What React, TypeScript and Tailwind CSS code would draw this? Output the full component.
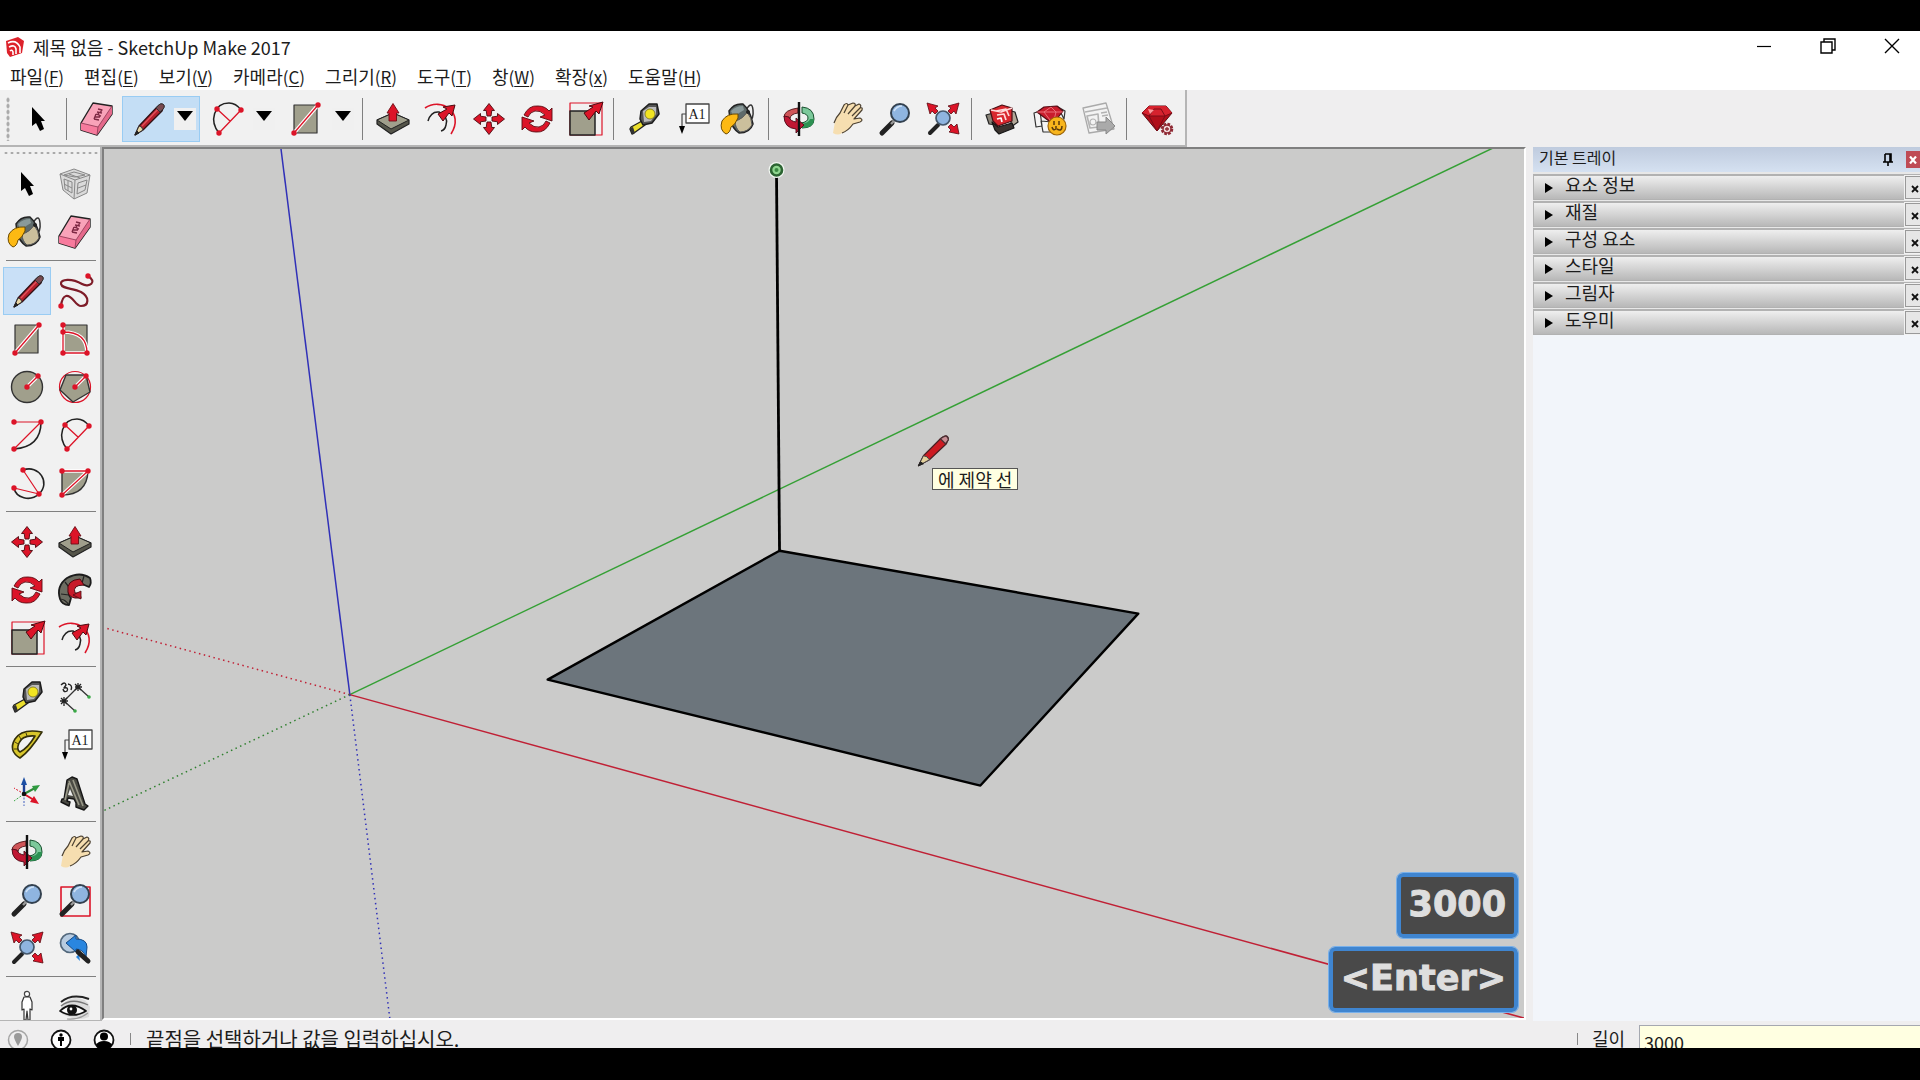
import React from 'react';

const RED = '#dc1428';
const KHAKI = '#a09f8c';

function Icon({ children }: { children: React.ReactNode }) {
  return (
    <svg viewBox="-18 -18 36 36" className="h-9 w-9 overflow-visible" fill="none" aria-hidden="true" strokeLinejoin="round">
      {children}
    </svg>
  );
}

function Dots({ at }: { at: [number, number][] }) {
  return (
    <>
      {at.map(([x, y]) => (
        <circle key={`${x},${y}`} cx={x} cy={y} r="2.7" fill={RED} />
      ))}
    </>
  );
}

const Pointer = () => (
  <Icon>
    <path d="M-6-12V7L-2 4L2 12L6 10L3 2H7Z" fill="#000" />
  </Icon>
);

const Component = () => (
  <Icon>
    <g stroke="#888" strokeWidth="1">
      <path d="M-15-10L-1-15L15-9L12 9L-1 15L-12 6Z" fill="#dadada" />
      <path d="M-15-10L0-4L15-9M0-4L-1 15M-11-9L-1-12L10-9L0-7ZM-11-5L-3-2L-3 9L-10 5ZM3-1L12-4L10 6L2 10ZM-11 0L-3 4M3 4L11 1M-6-10L5-6M-7-3L-7 7" />
    </g>
  </Icon>
);

const Bucket = () => (
  <Icon>
    <path d="M6-9Q12-19 13-9Q14 0 9 2" stroke="#333" strokeWidth="1.5" />
    <path d="M-11-8Q-6-16 3-15Q10-9 13 5Q10 14-1 14Q-8 9-10 0Z" fill="#5e6a6a" stroke="#222" strokeWidth="1.5" />
    <path d="M-5 2Q3 0 7-7Q12-1 12 6Q8 13 0 13Q-5 9-5 2Z" fill="#cbbf9c" stroke="#555" strokeWidth="1" />
    <path d="M-9-8Q-4-13 3-13L4-9Q-2-5-7-3Z" fill="#8a9a9a" />
    <path d="M-2-5Q-13-6-18 2Q-21 11-14 15Q-10 14-9 8Q-5 6-2-1Z" fill="#fdb913" stroke="#6b4a00" strokeWidth="1" />
    <circle cx="8" cy="-7" r="2" fill="#222" />
  </Icon>
);

const Eraser = () => (
  <Icon>
    <path d="M-4-16L15-13V-5L0 16L-16 11V4Z" fill="#f9a3b9" stroke="#222" strokeWidth="1.4" />
    <path d="M-16 4L1 8L0 16L-16 11Z" fill="#f77b9d" />
    <path d="M1 8L15-13V-5L0 16Z" fill="#e5698b" />
    <path d="M-16 4L1 8L15-13M1 8L0 16" stroke="#8a3550" strokeWidth="0.8" />
    <path d="M-3 0L2 1M-2-2L3-2M-1-5L4-3M0-7L5-6M1-10L5-9L3-6M-3 0L-1-5M3-2L1-6" stroke="#7d2843" strokeWidth="1.3" />
  </Icon>
);

const Pencil = () => (
  <Icon>
    <path d="M-13 16L-9 7L9-12Q14-17 16-13L14-8L-5 11Z" fill="#b5202c" stroke="#301014" strokeWidth="1.3" />
    <path d="M-13 16L-9 7Q-6 7-5 11Z" fill="#ead7a4" stroke="#333" strokeWidth="1" />
    <path d="M-13 16L-11 12L-9 14Z" fill="#222" stroke="#222" />
    <path d="M-6 7L11-11" stroke="#e0525b" strokeWidth="1.3" />
    <path d="M8-11L12-7L16-11Q17-16 12-15Z" fill="#7a4a50" stroke="#333" strokeWidth="1" />
  </Icon>
);

const Arc2 = () => (
  <Icon>
    <path d="M-8 14C-18 2-13-16 2-16Q9-16 14-9" stroke="#222" strokeWidth="1.5" />
    <path d="M-8 14L14-9M-10-10L3 2" stroke={RED} strokeWidth="1.3" />
    <Dots at={[[-10, -10], [14, -9], [-8, 14]]} />
  </Icon>
);

const Rect = () => (
  <Icon>
    <path d="M-12-14H11V14H-12Z" fill={KHAKI} stroke="#333" strokeWidth="1.2" />
    <path d="M-12 14L12-14" stroke="#fff" strokeWidth="3.6" />
    <path d="M-12 14L12-14" stroke={RED} strokeWidth="1.3" />
    <Dots at={[[-12, 14], [12, -14]]} />
  </Icon>
);

const RotRect = () => (
  <Icon>
    <path d="M-12-14H12V14H-12Z" fill={KHAKI} stroke="#333" strokeWidth="1.2" />
    <path d="M-12-14V14H12Q12-7-12-7" stroke="#fff" strokeWidth="3.6" />
    <path d="M-12-14V14H12Q12-7-12-7" stroke={RED} strokeWidth="1.3" />
    <Dots at={[[-12, -14], [-12, -7], [-12, 14], [12, 14]]} />
  </Icon>
);

const Freehand = () => (
  <Icon>
    <path d="M13-15C23-9 14-3 7-7C-3-13-15-12-14-7C-13-2-2-3 6 1C15 6 14 15 6 15C0 15-2 4-9 5Q-13 6-14 15" stroke="#7e1c28" strokeWidth="2.2" />
    <Dots at={[[13, -15], [-14, 15]]} />
  </Icon>
);

const Circle = () => (
  <Icon>
    <circle r="15.5" fill={KHAKI} stroke="#333" strokeWidth="1.4" />
    <path d="M0 0L11-11" stroke="#fff" strokeWidth="3.6" />
    <path d="M0 0L11-11" stroke={RED} strokeWidth="1.3" />
    <Dots at={[[0, 0], [11, -11]]} />
  </Icon>
);

const Polygon = () => (
  <Icon>
    <circle r="15.5" stroke={RED} strokeWidth="1.2" />
    <path d="M-9-12L11-12L15 5L-2 15L-15 3Z" fill={KHAKI} stroke="#333" strokeWidth="1.4" />
    <path d="M0 0L11-11" stroke="#fff" strokeWidth="3.6" />
    <path d="M0 0L11-11" stroke={RED} strokeWidth="1.3" />
    <Dots at={[[0, 0], [11, -11]]} />
  </Icon>
);

const Arc = () => (
  <Icon>
    <path d="M14-13Q14 12-13 14" stroke="#222" strokeWidth="1.6" />
    <path d="M-13-13H14L-13 14" stroke={RED} strokeWidth="1.2" />
    <Dots at={[[-13, -13], [14, -13], [-13, 14]]} />
  </Icon>
);

const Arc3 = () => (
  <Icon>
    <path d="M-4-13C12-19 24 0 12 11C3 19-11 15-13 5" stroke="#222" strokeWidth="1.6" />
    <path d="M-4-13L12 11L-13 5" stroke={RED} strokeWidth="1.2" />
    <Dots at={[[-4, -13], [12, 11], [-13, 5]]} />
  </Icon>
);

const Pie = () => (
  <Icon>
    <path d="M-13-12H13Q12 12-13 12Z" fill={KHAKI} stroke="#333" strokeWidth="1.4" />
    <path d="M-13-12H13L-13 12" stroke="#fff" strokeWidth="3.6" />
    <path d="M-13-12H13L-13 12" stroke={RED} strokeWidth="1.3" />
    <Dots at={[[-13, -12], [13, -12], [-13, 12]]} />
  </Icon>
);

const Move = () => (
  <Icon>
    {[0, 90, 180, 270].map((a) => (
      <path key={a} transform={`rotate(${a})`} d="M0-15.5L5.5-8.5H2.8L2-3H-2L-2.8-8.5H-5.5Z" fill={RED} stroke="#4c0a10" strokeWidth="0.9" />
    ))}
    <circle r="1.5" fill="#fff" />
  </Icon>
);

const PushPull = () => (
  <Icon>
    <path d="M-16 1L0-6L16 1V5L-2 15L-16 5Z" fill="#55554a" stroke="#222" strokeWidth="1.2" />
    <path d="M-16 1L0-6L16 1L-2 10Z" fill={KHAKI} stroke="#222" strokeWidth="1" />
    <path d="M0-15.5L6-6H3.5V2H-4V-6H-6Z" fill={RED} stroke="#6b0c14" strokeWidth="0.9" />
  </Icon>
);

const Rotate = () => (
  <Icon>
    {[0, 180].map((a) => (
      <path key={a} transform={`rotate(${a})`} d="M-13-4Q-8-14 1-13Q8-13 12-8L15-11V2L3-2L8-4Q3-9-2-8Q-7-7-9-2Z" fill={RED} stroke="#5a0b12" strokeWidth="0.9" />
    ))}
  </Icon>
);

const FollowMe = () => (
  <Icon>
    <path d="M-15 9Q-19-4-8-12Q5-19 15-12Q17-7 14-3L7-6Q0-8-5-2Q-8 4-4 8L-6 15Q-13 15-15 9Z" fill="#6d6d62" stroke="#1c1c1c" strokeWidth="1.8" />
    <path d="M-10-8Q-4-1-5 3M-14 4L-6 5M9-14L7-7M-15 9Q-10 9-6 15" stroke="#222" strokeWidth="1.2" />
    <path d="M5-11Q-9-10-7 2Q-6 7 0 8H6L5 3L0 3Q-3-5 9-5Z" fill="#c71a2a" stroke="#4c0a10" strokeWidth="1" />
    <path d="M-2 5L6 1V9Z" fill="#c71a2a" stroke="#4c0a10" strokeWidth="0.8" />
  </Icon>
);

const Scale = () => (
  <Icon>
    <path d="M-15-16H17V16H-15Z" stroke={RED} strokeWidth="1.2" />
    <path d="M-15-8H10V16H-15Z" fill={KHAKI} stroke="#222" strokeWidth="1.5" />
    <path d="M18-17L14-5L11-8L4 1L-1-6L8-12L4-13Z" fill={RED} stroke="#4c0a10" strokeWidth="1" />
  </Icon>
);

const Offset = () => (
  <Icon>
    <path d="M-16-11C0-22 24-7 10 15" stroke={RED} strokeWidth="1.6" />
    <path d="M-13 2Q-10-8-2-7Q8-2 5 6Q4 11 0 12" stroke="#222" strokeWidth="1.5" />
    <path d="M14-14L11-3L8-6L2 2L-3-5L6-10L2-12Z" fill={RED} stroke="#4c0a10" strokeWidth="1" />
  </Icon>
);

const Tape = () => (
  <Icon>
    <path d="M-13 8L-2 2L1 6L-10 14L-12 15L-14 10Z" fill="#ebdf2d" stroke="#222" strokeWidth="1.4" />
    <path d="M-14 9L-11 8L-9 14L-12 15Z" fill="#333" />
    <path d="M-3-8L5-15L13-15L15-5L8 4L-1 6L-4 0Z" fill="#555" stroke="#1c1c1c" strokeWidth="1.5" />
    <path d="M-1-8L5-12L12-12L12-5L7 2L0 3Z" fill="#bbb" />
    <circle cx="6" cy="-5" r="5" fill="#f2e421" stroke="#77701a" strokeWidth="0.8" />
  </Icon>
);

const Dimension = () => (
  <Icon>
    <path d="M3-10L-11 4M3-10L14 0M-11 4L0 14" stroke="#333" strokeWidth="1.3" />
    <path d="M0-13L6-7M3-14V-6M0-10H7M6-13L0-7M-14 1L-8 7M-11 0V9M-15 4H-7M-8 1L-14 7" stroke="#222" strokeWidth="1.3" />
    <path d="M-14-12Q-10-16-9-12L-11-9Q-6-10-8-6Q-11-4-12-8M-7-13Q-2-12-4-7" stroke="#222" strokeWidth="1.4" />
    <circle cx="14" cy="0" r="1.8" fill="#39a845" />
    <circle cx="0" cy="14" r="1.8" fill="#39a845" />
  </Icon>
);

const Protractor = () => (
  <Icon>
    <path fillRule="evenodd" d="M15-13Q-5-17-12-6Q-19 6-7 13Q3 6 15-13ZM8-9Q-5-10-8-2Q-11 5-7 7Q1 3 8-9Z" fill="#d8c62b" stroke="#332f0a" strokeWidth="1.6" />
    <path d="M-12-3L-9-1M-8-9L-6-6M-1-12L0-9M-13 4L-10 4" stroke="#443d0c" />
  </Icon>
);

const TextTool = () => (
  <Icon>
    <path d="M-6-15H17V4H-6Z" fill="#fff" stroke="#444" strokeWidth="1.3" />
    <path d="M-6-5H-10V8" stroke="#444" strokeWidth="1.2" />
    <path d="M-13 7H-7L-10 15Z" fill="#000" />
    <text x="5" y="0" textAnchor="middle" fontSize="14" fill="#222" fontFamily="Liberation Serif, serif">A1</text>
  </Icon>
);

const Axes = () => (
  <Icon>
    <path d="M-3 1V-9" stroke="#1d3f94" strokeWidth="2.4" />
    <path d="M-6-8H0L-3-16Z" fill="#1d4fa4" />
    <path d="M-3 1L8-5" stroke="#2f8a38" strokeWidth="2" />
    <path d="M5-7L13-8L8-1Z" fill="#2f9a40" />
    <path d="M-3 1L7 7" stroke={RED} strokeWidth="2" />
    <path d="M7 3L12 11L3 9Z" fill={RED} />
    <path d="M-3 1V13" stroke="#7c90cf" strokeDasharray="2 1.5" strokeWidth="1.5" />
    <path d="M-3 1L-13-5" stroke={RED} strokeDasharray="2 1.5" />
    <path d="M-3 1L-13 8" stroke="#39a845" strokeDasharray="2 1.5" />
    <circle cx="-3" cy="1" r="2.3" fill="#111" />
  </Icon>
);

const Text3D = () => (
  <Icon>
    <path d="M-8-13L-3-16L2-14L10 11L13 13L9 17L1 14V10L-1 6L-7 5L-8 8L-5 9L-6 13L-14 9L-13 6L-11 6Z" fill="#4a4a43" stroke="#161616" strokeWidth="1.4" />
    <path d="M-6-12L4 12M-2-13L8 13M-6-10L-10 7" stroke="#9a9989" strokeWidth="1.6" />
    <path d="M-5-4L-2 3L-7 2Z" fill="#eee" />
  </Icon>
);

const Orbit = () => (
  <Icon>
    <path d="M-1-11Q-15-9-15-2L-9 0Q-9-5-1-6Z" fill="#cf5558" stroke="#4b1518" strokeWidth="0.9" />
    <path d="M3-6V-12Q15-11 15 0Q15 9 3 9L2 4Q9 3 9-1Q9-5 3-6Z" fill="#7cc99b" stroke="#174f2d" strokeWidth="1" />
    <path d="M15 0Q15 9 3 9L2 5Q10 4 11 0Z" fill="#2d9152" />
    <path d="M-15-3Q-15 9-3 10V14L5 6L-3-1V3Q-9 2-10-2Z" fill="#c01733" stroke="#4c0a16" strokeWidth="0.9" />
    <path d="M0-17V17" stroke="#111" strokeWidth="2.4" />
  </Icon>
);

const Hand = () => (
  <Icon>
    <path d="M-14 14C-12 4-12-1-7-6L-3-14Q0-17 1-14L6-16Q9-16 8-13L12-15Q15-14 13-11Q16-12 15-9L7 0L13-1Q17 1 13 3L6 5Q1 12-5 14Q-9 17-14 14Z" fill="#f6deb0" />
    <path d="M-13 4Q-11-2-7-6L-3-14Q0-17 1-14L6-16Q9-16 8-13L12-15Q15-14 13-11Q16-12 15-9L7 0L13-1Q17 1 13 3L6 5Q1 12-5 14M1-14L-3-6M8-13L1-5M13-11L5-3" stroke="#4b4030" strokeWidth="1.2" />
  </Icon>
);

const Lens = () => (
  <>
    <path d="M-13 14L-3 4" stroke="#222" strokeWidth="5" strokeLinecap="round" />
    <path d="M-4 5L0 1" stroke="#999" strokeWidth="2.4" />
    <circle cx="5" cy="-6" r="9" fill="#8fb5e0" stroke="#33414f" strokeWidth="2" />
    <path d="M-1-8Q2-13 7-13" stroke="#cfe2f6" strokeWidth="1.6" />
  </>
);

const Zoom = () => (
  <Icon>
    <Lens />
  </Icon>
);

const ZoomWindow = () => (
  <Icon>
    <path d="M-14-13H15V16H-14Z" stroke={RED} strokeWidth="1.6" />
    <Lens />
  </Icon>
);

const ZoomExtents = () => (
  <Icon>
    <path d="M-13 14L-5 6" stroke="#222" strokeWidth="4" strokeLinecap="round" />
    <circle cx="0" cy="-1" r="7" fill="#8fb5e0" stroke="#45586c" strokeWidth="1.7" />
    <path d="M-16-16L-5-13L-8-11L-5-8L-8-5L-11-8L-13-5Z" fill={RED} stroke="#5a0b12" strokeWidth="0.8" />
    <path d="M16-16L5-13L8-11L5-8L8-5L11-8L13-5Z" fill={RED} stroke="#5a0b12" strokeWidth="0.8" />
    <path d="M16 15L6 13L8 11L5 8L8 5L11 8L14 5Z" fill={RED} stroke="#5a0b12" strokeWidth="0.8" />
  </Icon>
);

const Previous = () => (
  <Icon>
    <circle cx="-5" cy="-5" r="9.5" fill="#b7cbe0" stroke="#53687c" strokeWidth="1.7" />
    <path d="M-9-5L1-13V-9Q12-9 12-1L11 9Q8 1 1 1V4Z" fill="#2a86df" stroke="#164a86" strokeWidth="1" />
    <path d="M1 9L5 13L4 6Z" fill="#2a86df" />
    <path d="M3 4L13 13" stroke="#222" strokeWidth="5" strokeLinecap="round" />
  </Icon>
);

const Person = () => (
  <Icon>
    <circle cx="0" cy="-13" r="2.6" fill="#fff" stroke="#444" strokeWidth="1.2" />
    <path d="M-3-10H3L5-5V3L3 2V13H1L0 4L-1 13H-3V2L-5 3V-5Z" fill="#fff" stroke="#333" strokeWidth="1.2" />
    <path d="M-4 14H-1M2 14H4" stroke={RED} strokeWidth="1.2" />
  </Icon>
);

const Eye = () => (
  <Icon>
    <path d="M-15 4Q-12-8 0-9Q12-9 15 0L14 10Q2 15-13 7Z" fill="#dcdcdc" />
    <path d="M-14-5Q-3-14 14-8" stroke="#222" strokeWidth="2" />
    <path d="M-14-1Q-3-10 13-2" stroke="#777" strokeWidth="1.3" />
    <path d="M-15 4Q-4-7 11 4Q-2 12-15 4Z" fill="#fbfbfb" stroke="#111" strokeWidth="1.7" />
    <circle cx="-3" cy="3" r="5" fill="#111" />
    <circle cx="-4" cy="2" r="1.4" fill="#fff" />
    <path d="M-8 12Q4 13 13 6" stroke="#999" strokeWidth="1.2" />
  </Icon>
);

const Warehouse = () => (
  <Icon>
    <path d="M-16-4L-9-6L-6 6L-13 5Z" fill="#8a8478" stroke="#222" strokeWidth="1.2" />
    <path d="M9-8L13-7L16 3L9 8Z" fill="#b2a898" stroke="#222" strokeWidth="1.2" />
    <path d="M-10 3L-4 8L10 4L12 9L-3 15L-7 11Z" fill="#3b332f" stroke="#161616" strokeWidth="1.2" />
    <path d="M-12-9L0-14L10-11L10 2L-4 7L-9 2Z" fill="#d9272e" stroke="#491014" strokeWidth="1.2" />
    <path d="M-6-8L4-10L7-3M-5-4L2-5L4 1M-11-9L-1-7L10-11" stroke="#ffd9d9" strokeWidth="1.7" />
    <path d="M-5 0L-1-1L0 3" stroke="#fff" strokeWidth="1.7" />
  </Icon>
);

const Extension = () => (
  <Icon>
    <path d="M-16-6L-10-8L-8 7L-14 8ZM8-12L15-8L14 0ZM-9 2L-7 13L3 13L2 3Z" fill="#f4f4f4" stroke="#333" strokeWidth="1.2" />
    <path d="M-13-7L-6-12L7-13L13-8L3 5Z" fill="#c91c2c" stroke="#540b14" strokeWidth="1.2" />
    <path d="M-13-7H13M-6-7L3 5L6-7L1-12L-6-7" stroke="#ee7780" strokeWidth="0.9" />
    <circle cx="7" cy="7" r="9" fill="#f8b51c" stroke="#9d6608" strokeWidth="1.2" />
    <path d="M4 2V6M9 2V6M2 8Q3 12 6 10V7M7 10Q12 13 12 7" stroke="#59390a" strokeWidth="1.5" />
  </Icon>
);

const Layout = () => (
  <Icon>
    <path d="M-15-11L8-16L16 10L-9 14Z" fill="#f3f3f3" stroke="#aaa" strokeWidth="1.3" />
    <path d="M-13-7L9-11M-11-3L0-5L1 8L-8 9ZM3-6L9-7M4-3L10-4" stroke="#b3b3b3" strokeWidth="1.6" />
    <circle cx="-5" cy="3" r="3" stroke="#b3b3b3" strokeWidth="1.2" />
    <path d="M-1 3H8V-2L17 7L8 15V11H-1Z" fill="#aaa" stroke="#888" />
  </Icon>
);

const Ruby = () => (
  <Icon>
    <path d="M-15-6L-8-13H9L15-6L0 12Z" fill="#b00f1a" stroke="#5b0910" strokeWidth="1" />
    <path d="M-15-6L-8-13H9L15-6L8-3H-8Z" fill="#d6222e" />
    <path d="M-8-3L-3-10L4-10L8-3M-8-3L0 12L8-3M-15-6L-8-3H8L15-6" stroke="#7c0c17" strokeWidth="1" />
    <path d="M-9-10L-3-9L-7-5Z" fill="#ff9a9d" />
    <circle cx="10" cy="10" r="5" fill="#f0dada" stroke="#8f2a34" strokeWidth="2.6" strokeDasharray="2.6 1.3" />
    <circle cx="10" cy="10" r="4" stroke="#8f2a34" strokeWidth="1.4" />
    <path d="M10 8V12M8 10H12" stroke="#8f2a34" strokeWidth="1.3" />
  </Icon>
);

type Tool = [string, React.ComponentType];

function ToolButton({ tool, active }: { tool: Tool; active?: boolean }) {
  const [label, Glyph] = tool;
  return (
    <button
      aria-label={label}
      className={
        active
          ? 'flex h-12 w-12 shrink-0 items-center justify-center border border-[#99ccf3] bg-[#c9e0f7]'
          : 'flex h-12 w-12 shrink-0 items-center justify-center'
      }
    >
      <Glyph />
    </button>
  );
}

function SplitButton({ tool, active }: { tool: Tool; active?: boolean }) {
  const [label, Glyph] = tool;
  return (
    <div className={active ? 'flex h-[46px] w-[78px] shrink-0 items-center bg-[#c4def5] outline -outline-offset-1 outline-[#99ccf3]' : 'flex h-[46px] w-[78px] shrink-0 items-center'}>
      <button aria-label={label} className="flex h-full w-[52px] items-center justify-center">
        <Glyph />
      </button>
      <button aria-label={`${label} 옵션`} className="flex h-[22px] w-[22px] items-center justify-center bg-[#f0f0f0]">
        <svg viewBox="0 0 16 10" className="mb-1.5 h-2.5 w-4" aria-hidden="true">
          <path d="M0 0H16L8 10Z" fill="#000" />
        </svg>
      </button>
    </div>
  );
}

const topGroups: Tool[][] = [
  [['밀기/끌기', PushPull], ['오프셋', Offset], ['이동', Move], ['회전', Rotate], ['배율', Scale]],
  [['줄자', Tape], ['텍스트', TextTool], ['페인트통', Bucket]],
  [['궤도', Orbit], ['이동 보기', Hand], ['확대/축소', Zoom], ['범위 확대', ZoomExtents]],
  [['3D 웨어하우스', Warehouse], ['확장 웨어하우스', Extension], ['레이아웃', Layout]],
  [['확장 관리자', Ruby]],
];

const sideGroups: Tool[][] = [
  [['선택', Pointer], ['구성 요소 만들기', Component], ['페인트통', Bucket], ['지우개', Eraser]],
  [
    ['선', Pencil], ['프리핸드', Freehand],
    ['직사각형', Rect], ['회전 직사각형', RotRect],
    ['원', Circle], ['다각형', Polygon],
    ['호', Arc], ['2점 호', Arc2],
    ['3점 호', Arc3], ['파이', Pie],
  ],
  [['이동', Move], ['밀기/끌기', PushPull], ['회전', Rotate], ['따라가기', FollowMe], ['배율', Scale], ['오프셋', Offset]],
  [['줄자', Tape], ['치수', Dimension], ['각도기', Protractor], ['텍스트', TextTool], ['축', Axes], ['3D 텍스트', Text3D]],
  [['궤도', Orbit], ['이동 보기', Hand], ['확대/축소', Zoom], ['창 확대', ZoomWindow], ['범위 확대', ZoomExtents], ['이전', Previous]],
  [['카메라 배치', Person], ['둘러보기', Eye]],
];

const menus = [
  ['파일', 'F'], ['편집', 'E'], ['보기', 'V'], ['카메라', 'C'], ['그리기', 'R'],
  ['도구', 'T'], ['창', 'W'], ['확장', 'x'], ['도움말', 'H'],
];

const trays = ['요소 정보', '재질', '구성 요소', '스타일', '그림자', '도우미'];

const TopSeparator = () => <div className="mr-1.5 ml-1 h-[42px] w-px shrink-0 bg-[#808080]" />;

function TitleBar() {
  return (
    <header className="flex h-8 shrink-0 items-center bg-white pl-[5px]">
      <svg viewBox="0 0 20 22" className="h-[22px] w-5" aria-hidden="true">
        <path d="M1 5L13 1L19 5L17 17L5 21L2 17Z" fill="#dd222b" />
        <path d="M3 7Q11 3 15 11V17M4 11Q10 8 11 13V18M5 15Q7 13 8 16V19" fill="none" stroke="#fff" strokeWidth="1.6" />
      </svg>
      <h1 className="ml-2 flex-1 text-lg leading-6">제목 없음 - SketchUp Make 2017</h1>
      <div className="flex pb-0.5">
        <button aria-label="최소화" className="flex h-6 w-16 items-center justify-center">
          <svg viewBox="0 0 16 16" className="h-4 w-4" aria-hidden="true"><path d="M1 8.5H15" stroke="#000" strokeWidth="1.2" /></svg>
        </button>
        <button aria-label="이전 크기로" className="flex h-6 w-16 items-center justify-center">
          <svg viewBox="0 0 16 16" className="h-4 w-4" fill="none" stroke="#000" strokeWidth="1.4" aria-hidden="true">
            <path d="M1 4H12V15H1ZM4 4V1H15V12H12" />
          </svg>
        </button>
        <button aria-label="닫기" className="flex h-6 w-[60px] items-center justify-center pl-1">
          <svg viewBox="0 0 16 16" className="h-4 w-4" aria-hidden="true"><path d="M1 1L15 15M15 1L1 15" stroke="#000" strokeWidth="1.4" /></svg>
        </button>
      </div>
    </header>
  );
}

function Scene() {
  return (
    <svg viewBox="103 149 1421 870" preserveAspectRatio="xMinYMin slice" className="h-full w-full" fill="none" role="img" aria-label="모델 보기">
      <g strokeWidth="1.5">
        <path d="M349 695L1493 148" stroke="#35a035" />
        <path d="M349 695L280 148" stroke="#3030b8" />
        <path d="M349 695L1525 1019" stroke="#c02035" />
        <g strokeDasharray="1.5 3.5">
          <path d="M349 695L103 628" stroke="#c02035" />
          <path d="M349 695L103 811" stroke="#308030" />
          <path d="M349 695L389 1019" stroke="#3030b8" />
        </g>
      </g>
      <path d="M779 551L1138 614L980 786L547 680Z" fill="#6c757c" stroke="#000" strokeWidth="2.4" strokeLinejoin="round" />
      <path d="M776 176L779 551" stroke="#000" strokeWidth="2.8" />
      <circle cx="776" cy="170" r="8" fill="#f2f7f2" />
      <circle cx="776" cy="170" r="5.5" fill="#8fd68f" stroke="#2c6432" strokeWidth="2.6" />
      <circle cx="776" cy="170" r="2" fill="#3c8a42" />
      <g strokeLinejoin="round">
        <path d="M918 466L923 456L940 439Q947 433 948 439L946 444L929 460Z" fill="#cc1a22" stroke="#4a2024" strokeWidth="1.2" />
        <path d="M918 466L923 456Q927 456 929 460Z" fill="#e4d19c" stroke="#444" strokeWidth="1" />
        <path d="M918 466L920 462L923 464Z" fill="#222" stroke="#222" />
        <path d="M940 439L945 444L948 440Q947 433 940 439Z" fill="#c98f95" stroke="#4a3034" strokeWidth="1.2" />
      </g>
    </svg>
  );
}

function KeyCap({ children }: { children: React.ReactNode }) {
  return (
    <kbd className="flex h-[65px] items-center rounded-md border-4 border-[#3f85d0] bg-[#494949] px-2 pb-0.5 font-['DejaVu_Sans',sans-serif] text-[35px] leading-none font-bold text-[#dedede] outline outline-[#78b0ea] [-webkit-text-stroke:1px_#dedede]">
      {children}
    </kbd>
  );
}

function Tray() {
  return (
    <aside className="ml-[7px] flex w-[387px] shrink-0 flex-col overflow-hidden bg-[#f2f5fa]">
      <div className="flex h-[25px] shrink-0 items-center bg-linear-to-b from-[#bfcbde] to-[#d5e1f1] pl-1.5">
        <h2 className="flex-1 pb-1.5 text-base leading-5">기본 트레이</h2>
        <button aria-label="고정" className="mr-3 flex h-4 w-3 items-center">
          <svg viewBox="0 0 12 14" className="h-3.5 w-3" aria-hidden="true">
            <path d="M3 1H9V9M3 1V9M1 9H11M6 9V13M8 1V9" fill="none" stroke="#000" strokeWidth="1.6" />
          </svg>
        </button>
        <button aria-label="닫기" className="flex h-[17px] w-[14px] items-center justify-center bg-[#bf4b55]">
          <svg viewBox="0 0 8 8" className="h-2 w-2" aria-hidden="true"><path d="M1 0.5L7 7.5M7 0.5L1 7.5" stroke="#fff" strokeWidth="2.2" /></svg>
        </button>
      </div>
      <div className="flex flex-col gap-px bg-[#e8e8e8] pt-0.5">
        {trays.map((t) => (
          <section key={t} className="flex h-[26px] border-t-2 border-b border-l border-[#b2b2b2] bg-linear-to-b from-[#efefef] to-[#b8b8b8]">
            <button className="flex flex-1 items-center gap-3 pl-[11px] text-left text-lg leading-5">
              <svg viewBox="0 0 8 10" className="h-2.5 w-2" aria-hidden="true"><path d="M0 0L8 5L0 10Z" fill="#000" /></svg>
              <span className="pb-2">{t}</span>
            </button>
            <button aria-label={`${t} 닫기`} className="flex w-[15px] items-center justify-center border border-r-0 border-[#999] bg-[#e6e6e6] pt-0.5 pl-1 outline outline-[#f2f2f2]">
              <svg viewBox="0 0 8 8" className="h-2 w-2" aria-hidden="true"><path d="M1 1L7 7M7 1L1 7" stroke="#111" strokeWidth="1.8" /></svg>
            </button>
          </section>
        ))}
      </div>
    </aside>
  );
}

function StatusBar() {
  return (
    <footer className="flex h-[27px] shrink-0 items-start overflow-hidden bg-[#efeeef]">
      <div className="mt-2 flex flex-1 gap-[21px] pl-[7px]">
        <button aria-label="위치 정보">
          <svg viewBox="0 0 22 22" className="h-[22px] w-[22px]" aria-hidden="true">
            <circle cx="11" cy="11" r="9.5" fill="none" stroke="#a5a5a5" strokeWidth="1.5" />
            <path d="M11 17Q7 10 7 8A4 4 0 0 1 15 8Q15 10 11 17Z" fill="#999" />
          </svg>
        </button>
        <button aria-label="크레딧">
          <svg viewBox="0 0 22 22" className="h-[22px] w-[22px]" aria-hidden="true">
            <circle cx="11" cy="11" r="9.5" fill="#fff" stroke="#111" strokeWidth="1.8" />
            <circle cx="11" cy="6" r="1.7" />
            <path d="M8 8H14V12H12V17H10V12H8Z" />
          </svg>
        </button>
        <button aria-label="로그인">
          <svg viewBox="0 0 22 22" className="h-[22px] w-[22px]" aria-hidden="true">
            <circle cx="11" cy="11" r="9.5" fill="#fff" stroke="#111" strokeWidth="1.8" />
            <circle cx="11" cy="7.5" r="4" />
            <path d="M3 16Q5 12 11 12Q17 12 19 16Q16 21 11 21Q6 21 3 16Z" />
          </svg>
        </button>
        <span className="-ml-1.5 mt-1 h-3 w-px bg-[#888]" />
        <p className="-ml-1.5 -mt-0.5 text-xl leading-6">끝점을 선택하거나 값을 입력하십시오.</p>
      </div>
      <span className="mt-3 h-3 w-px bg-[#888]" />
      <label htmlFor="length" className="ml-3.5 mt-[5px] text-lg leading-6">길이</label>
      <input id="length" defaultValue="3000" className="ml-3.5 mt-1 h-[30px] w-[281px] border border-r-0 border-[#a5a8b0] bg-[#ffffe1] pt-1 pl-1 text-lg leading-6 outline-none" />
    </footer>
  );
}

export default function App() {
  return (
    <div className="flex h-screen flex-col overflow-hidden bg-black pt-[31px] pb-8 font-['Noto_Sans_CJK_KR',sans-serif] text-[#1c1c1c]">
      <TitleBar />
      <nav className="flex h-[27px] shrink-0 items-center gap-5 bg-white pl-2.5">
        {menus.map(([name, key]) => (
          <button key={name} className="text-lg leading-6">
            {name}
            <span className="text-[17px]">(<u className="underline-offset-2">{key}</u>)</span>
          </button>
        ))}
      </nav>

      <div className="flex h-[57px] shrink-0 bg-[#efeeef]">
        <div className="flex items-center border-r-2 border-b-2 border-[#b5b5b5] bg-[#f1f1f1] pt-[3px] pr-1">
          <div className="ml-1.5 h-11 w-2 shrink-0 bg-[radial-gradient(#aaa_1px,transparent_2px)] bg-[size:4px_6px] bg-repeat-y" />
          <ToolButton tool={['선택', Pointer]} />
          <TopSeparator />
          <div className="flex items-center gap-px">
            <ToolButton tool={['지우개', Eraser]} />
            <SplitButton tool={['선', Pencil]} active />
            <SplitButton tool={['2점 호', Arc2]} />
            <SplitButton tool={['직사각형', Rect]} />
          </div>
          {topGroups.map((group) => (
            <React.Fragment key={group[0][0]}>
              <TopSeparator />
              {group.map((t) => (
                <ToolButton key={t[0]} tool={t} />
              ))}
            </React.Fragment>
          ))}
        </div>
      </div>

      <div className="flex min-h-0 flex-1 bg-[#efeeef]">
        <div className="flex w-[102px] shrink-0 flex-col overflow-hidden border-r-2 border-b border-[#b5b5b5] bg-[#f1f1f1] pl-[3px]">
          <div className="mt-1 mb-[3px] h-1.5 w-[95px] shrink-0 bg-[radial-gradient(#aaa_1px,transparent_2px)] bg-[size:6px_4px] bg-repeat-x" />
          {sideGroups.map((group, i) => (
            <React.Fragment key={i}>
              {i > 0 && <div className="mt-1 mb-1.5 ml-[3px] h-px w-[90px] shrink-0 bg-[#808080]" />}
              <div className="grid shrink-0 grid-cols-[48px_48px]">
                {group.map((t) => (
                  <ToolButton key={t[0]} tool={t} active={t[1] === Pencil} />
                ))}
              </div>
            </React.Fragment>
          ))}
        </div>
        <main className="relative mb-px min-w-0 flex-1 overflow-hidden border-t-2 border-r-2 border-b-2 border-l-2 border-t-[#7f7f7f] border-r-white border-b-white border-l-[#7f7f7f] bg-[#cbcbca]">
          <Scene />
          <div role="tooltip" className="absolute top-[319px] left-[828px] border border-[#555] bg-[#ffffe1] px-[5px] text-lg leading-5">
            에 제약 선
          </div>
          <div className="absolute right-1.5 bottom-1.5 flex flex-col items-end gap-[9px]">
            <KeyCap>3000</KeyCap>
            <KeyCap>&lt;Enter&gt;</KeyCap>
          </div>
        </main>
        <Tray />
      </div>
      <StatusBar />
    </div>
  );
}
